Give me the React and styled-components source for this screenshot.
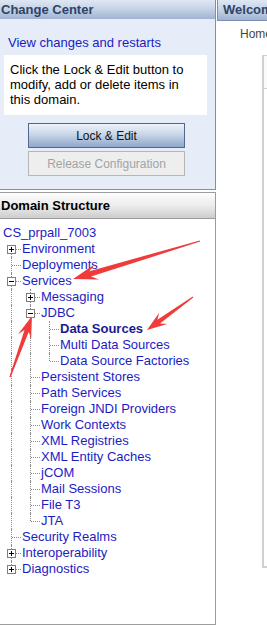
import React from 'react';
import styled, { createGlobalStyle } from 'styled-components';

const GlobalStyle = createGlobalStyle`
  html, body { margin: 0; padding: 0; background: #fff; }
  body { font-family: "Liberation Sans", Arial, sans-serif; font-size: 13px; color: #000; }
`;

const Page = styled.div`
  position: relative;
  display: flex;
  width: 267px;
  height: 627px;
  overflow: hidden;
  background: #fff;
`;

const LeftColumn = styled.div`
  flex: 0 0 216px;
  display: flex;
  flex-direction: column;
  gap: 2px;
`;

const ChangePanel = styled.section`
  height: 190px;
  box-sizing: border-box;
  background: #e6edf8;
  border-right: 1px solid #7b90b2;
  border-bottom: 1px solid #7b90b2;
`;

const BlueHeader = styled.h2`
  margin: 0;
  height: ${p => p.$h}px;
  line-height: ${p => p.$h}px;
  padding-left: ${p => p.$pl}px;
  font-size: 13px;
  font-weight: bold;
  color: #2e4466;
  white-space: nowrap;
  background: linear-gradient(to bottom, #dfe7f3 0%, #c3d1e6 50%, #9fb3d1 100%);
`;

const LinkRow = styled.div`
  padding: 16px 0 5px 8px;
  line-height: 15px;
`;

const Link = styled.a`
  color: ${p => (p.$bold ? '#1a1a8e' : '#1c1cc4')};
  font-weight: ${p => (p.$bold ? 'bold' : 'normal')};
  text-decoration: none;
  white-space: nowrap;
`;

const InfoBox = styled.p`
  margin: 0 8px 0 4px;
  padding: 7px 6px 8px;
  background: #fff;
  line-height: 15px;
  font-size: 13px;
`;

const ButtonStack = styled.div`
  display: flex;
  flex-direction: column;
  gap: 3px;
  margin: 8px 0 0 28px;
  width: 157px;
`;

const Button = styled.button`
  box-sizing: border-box;
  height: 25px;
  width: 157px;
  padding: 0;
  font-family: "Liberation Sans", Arial, sans-serif;
  font-size: 12px;
  color: ${p => (p.$disabled ? '#a3a3a3' : '#111')};
  border: 1px solid ${p => (p.$disabled ? '#b6b6b6' : '#50688e')};
  background: ${p =>
    p.$disabled
      ? '#eeeeee'
      : 'linear-gradient(to bottom, #eef2f9 0%, #c9d6e8 45%, #8fa7c9 100%)'};
`;

const DomainPanel = styled.section`
  height: 433px;
  box-sizing: border-box;
  border-top: 1px solid #9c9c9c;
  border-right: 1px solid #9c9c9c;
  border-bottom: 1px solid #9c9c9c;
  background: #fff;
`;

const GreyHeader = styled.h2`
  margin: 0;
  height: 25px;
  line-height: 25px;
  padding-left: 1px;
  font-size: 13px;
  font-weight: bold;
  color: #000;
  border-bottom: 1px solid #9c9c9c;
  background: linear-gradient(to bottom, #fdfdfd 0%, #ececec 50%, #cdcdcd 100%);
`;

const Tree = styled.div`
  padding: 6px 0 0 2px;
`;

const Row = styled.div`
  display: flex;
  height: 16px;
  line-height: 16px;
`;

const RootLabel = styled.div`
  height: 16px;
  line-height: 16px;
  padding-left: 1px;
`;

const Guide = styled.div`
  position: relative;
  flex: 0 0 19px;
  height: 16px;
  &::before {
    content: '';
    display: ${p => (p.$on ? 'block' : 'none')};
    position: absolute;
    left: 9px;
    top: 0;
    bottom: 0;
    border-left: 1px dotted #8a8a8a;
  }
`;

const Connector = styled.div`
  position: relative;
  flex: 0 0 19px;
  height: 16px;
  &::before {
    content: '';
    position: absolute;
    left: 9px;
    top: ${p => (p.$noTop ? 8 : 0)}px;
    bottom: ${p => (p.$last ? 8 : 0)}px;
    border-left: 1px dotted #8a8a8a;
  }
  &::after {
    content: '';
    position: absolute;
    left: 10px;
    top: 8px;
    width: 9px;
    border-top: 1px dotted #8a8a8a;
  }
`;

const ExpanderIcon = styled.svg`
  position: absolute;
  left: 5px;
  top: 4px;
  z-index: 1;
  display: block;
`;

const NodeLabel = styled.span`
  padding-left: 1px;
  white-space: nowrap;
`;

const RightColumn = styled.div`
  flex: 1 1 auto;
  min-width: 0;
  padding-left: 1px;
  display: flex;
  flex-direction: column;
`;

const WelcomeHeaderBox = styled.div`
  border-left: 1px solid #7b90b2;
  border-bottom: 1px solid #7b90b2;
`;

const Crumb = styled.div`
  margin: 6px 0 0 23px;
  font-size: 12px;
  line-height: 14px;
  color: #454545;
  white-space: nowrap;
`;

const ContentBox = styled.div`
  margin: 14px 0 0 45px;
  height: 513px;
  box-sizing: border-box;
  border-top: 1px solid #d0d0d0;
  border-left: 2px solid #d0d0d0;
  border-bottom: 2px solid #d0d0d0;
`;

const ContentHeadRow = styled.div`
  height: 32px;
  border-bottom: 1px solid #d0d0d0;
  background: #fafafa;
`;

const Overlay = styled.svg`
  position: absolute;
  left: 0;
  top: 0;
  pointer-events: none;
`;

const Expander = ({ open }) => (
  <ExpanderIcon width="9" height="9" viewBox="0 0 9 9">
    <rect x="0.5" y="0.5" width="8" height="8" fill="#fff" stroke="#7e7e7e" />
    <line x1="2" y1="4.5" x2="7" y2="4.5" stroke="#000" />
    {!open && <line x1="4.5" y1="2" x2="4.5" y2="7" stroke="#000" />}
  </ExpanderIcon>
);

const treeData = [
  { label: 'Environment', state: 'plus' },
  { label: 'Deployments' },
  {
    label: 'Services',
    state: 'minus',
    children: [
      { label: 'Messaging', state: 'plus' },
      {
        label: 'JDBC',
        state: 'minus',
        children: [
          { label: 'Data Sources', bold: true },
          { label: 'Multi Data Sources' },
          { label: 'Data Source Factories' },
        ],
      },
      { label: 'Persistent Stores' },
      { label: 'Path Services' },
      { label: 'Foreign JNDI Providers' },
      { label: 'Work Contexts' },
      { label: 'XML Registries' },
      { label: 'XML Entity Caches' },
      { label: 'jCOM' },
      { label: 'Mail Sessions' },
      { label: 'File T3' },
      { label: 'JTA' },
    ],
  },
  { label: 'Security Realms' },
  { label: 'Interoperability', state: 'plus' },
  { label: 'Diagnostics', state: 'plus' },
];

function TreeRows({ nodes, guides, top }) {
  return nodes.map((node, i) => {
    const last = i === nodes.length - 1;
    return (
      <React.Fragment key={node.label}>
        <Row>
          {guides.map((g, k) => (
            <Guide key={k} $on={g} />
          ))}
          <Connector $last={last} $noTop={top && i === 0}>
            {node.state && <Expander open={node.state === 'minus'} />}
          </Connector>
          <NodeLabel>
            <Link $bold={node.bold}>{node.label}</Link>
          </NodeLabel>
        </Row>
        {node.children && <TreeRows nodes={node.children} guides={[...guides, !last]} />}
      </React.Fragment>
    );
  });
}

function arrowPoints([tx, ty], [hx, hy], headLen, headHalf, neckHalf, tailHalf) {
  const dx = hx - tx;
  const dy = hy - ty;
  const len = Math.hypot(dx, dy);
  const ux = dx / len;
  const uy = dy / len;
  const nx = -uy;
  const ny = ux;
  const bx = hx - ux * headLen;
  const by = hy - uy * headLen;
  const kx = hx - ux * headLen * 0.72;
  const ky = hy - uy * headLen * 0.72;
  const pts = [
    [tx + nx * tailHalf, ty + ny * tailHalf],
    [kx + nx * neckHalf, ky + ny * neckHalf],
    [bx + nx * headHalf, by + ny * headHalf],
    [hx, hy],
    [bx - nx * headHalf, by - ny * headHalf],
    [kx - nx * neckHalf, ky - ny * neckHalf],
    [tx - nx * tailHalf, ty - ny * tailHalf],
  ];
  return pts.map(p => p.map(v => v.toFixed(1)).join(',')).join(' ');
}

const arrows = [
  { tail: [200, 241], tip: [73, 279], headLen: 25, headHalf: 8, neckHalf: 2.8 },
  { tail: [193, 297], tip: [147, 330], headLen: 20, headHalf: 7, neckHalf: 2.3 },
  { tail: [10, 377], tip: [32, 316], headLen: 22, headHalf: 7, neckHalf: 2.3 },
];

export default function App() {
  return (
    <>
      <GlobalStyle />
      <Page>
        <LeftColumn>
          <ChangePanel>
            <BlueHeader $h={19} $pl={1}>Change Center</BlueHeader>
            <LinkRow>
              <Link>View changes and restarts</Link>
            </LinkRow>
            <InfoBox>Click the Lock &amp; Edit button to modify, add or delete items in this domain.</InfoBox>
            <ButtonStack>
              <Button>Lock &amp; Edit</Button>
              <Button $disabled>Release Configuration</Button>
            </ButtonStack>
          </ChangePanel>
          <DomainPanel>
            <GreyHeader>Domain Structure</GreyHeader>
            <Tree>
              <RootLabel>
                <Link>CS_prpall_7003</Link>
              </RootLabel>
              <TreeRows nodes={treeData} guides={[]} top />
            </Tree>
          </DomainPanel>
        </LeftColumn>
        <RightColumn>
          <WelcomeHeaderBox>
            <BlueHeader $h={20} $pl={5}>Welcome</BlueHeader>
          </WelcomeHeaderBox>
          <Crumb>Home</Crumb>
          <ContentBox>
            <ContentHeadRow />
          </ContentBox>
        </RightColumn>
        <Overlay width="267" height="627" viewBox="0 0 267 627">
          {arrows.map((a, i) => (
            <polygon
              key={i}
              points={arrowPoints(a.tail, a.tip, a.headLen, a.headHalf, a.neckHalf, 0.6)}
              fill="#f03b3b"
            />
          ))}
        </Overlay>
      </Page>
    </>
  );
}
